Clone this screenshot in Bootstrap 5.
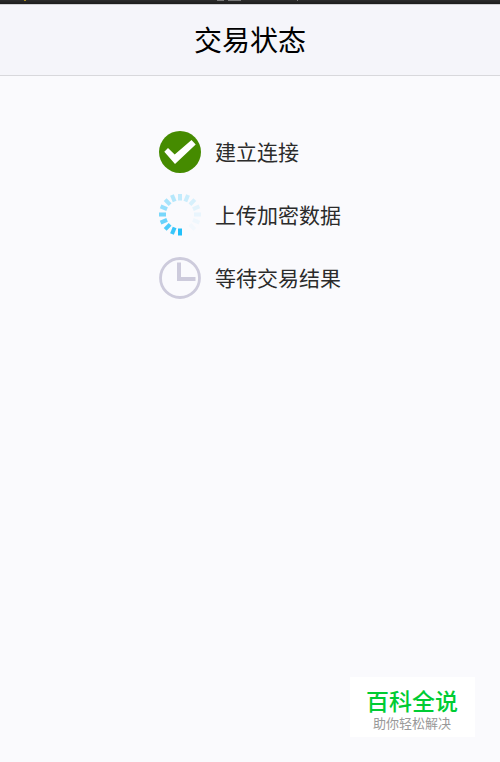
<!DOCTYPE html>
<html lang="zh-CN">
<head>
<meta charset="utf-8">
<meta name="viewport" content="width=device-width, initial-scale=1">
<title>交易状态</title>
<link href="https://cdn.jsdelivr.net/npm/bootstrap@5.3.0/dist/css/bootstrap.min.css" rel="stylesheet">
<style>
body { background: #fafafd; color: #2b2b2b; font-family: "Noto Sans CJK SC", sans-serif; }
.status-strip { height: 4px; background: linear-gradient(#2c2c2c, #1c1c1c); }
.title-bar { background: #f5f5fa; border-top: 1px solid #d0d0d4; border-bottom: 1px solid #d8d8dc; padding: 13px 0 15px; }
.title-bar h1 { font-size: 28px; line-height: 42px; font-weight: 400; color: #000; }
.steps { margin-top: 55px; gap: 21px; }
.step { gap: 14px; font-size: 21px; line-height: 40px; }
.brand { background: #fff; margin: 25px; padding: 8px 17px 6px 16px; }
.brand-name { color: #0c3; font-size: 23px; line-height: 30px; font-weight: 500; }
.brand-line { color: #999; font-size: 13px; line-height: 16px; }
</style>
<script src="https://cdn.jsdelivr.net/npm/bootstrap@5.3.0/dist/js/bootstrap.bundle.min.js" defer></script>
</head>
<body class="d-flex flex-column min-vh-100">
<div class="status-strip d-flex" aria-hidden="true">
  <svg width="300" height="4" viewBox="0 0 300 4"><path fill="#a68a20" d="M24 0h2v1h-2z"/><path fill="#777" d="M217 0h7v1h-7zM228 0h13v1h-13zM297 0h1v1h-1z"/></svg>
</div>
<header class="title-bar text-center">
  <h1 class="m-0">交易状态</h1>
</header>
<main class="flex-grow-1 d-flex justify-content-center align-items-start">
  <ul class="steps list-unstyled d-flex flex-column mb-0">
    <li class="step d-flex align-items-start">
      <svg width="42" height="42" viewBox="0 0 42 42" aria-hidden="true"><circle cx="21" cy="21" r="21" fill="#458b00"/><path fill="#fff" d="M5.3 20.8 9 17l6.7 6.6L32.5 9l4.2 4.6L16 33z"/></svg>
      <span>建立连接</span>
    </li>
    <li class="step d-flex align-items-start">
      <svg width="42" height="42" viewBox="0 0 42 42" aria-hidden="true" fill="#22c0fa">
        <defs><rect id="tick" x="19" y="34.5" width="4" height="7"/></defs>
        <use href="#tick"/>
        <use href="#tick" transform="rotate(22.5 21 20.5)" opacity=".9"/>
        <use href="#tick" transform="rotate(45 21 20.5)" opacity=".8"/>
        <use href="#tick" transform="rotate(67.5 21 20.5)" opacity=".68"/>
        <use href="#tick" transform="rotate(90 21 20.5)" opacity=".6"/>
        <use href="#tick" transform="rotate(112.5 21 20.5)" opacity=".46"/>
        <use href="#tick" transform="rotate(135 21 20.5)" opacity=".38"/>
        <use href="#tick" transform="rotate(157.5 21 20.5)" opacity=".32"/>
        <use href="#tick" transform="rotate(180 21 20.5)" opacity=".26"/>
        <use href="#tick" transform="rotate(202.5 21 20.5)" opacity=".22"/>
        <use href="#tick" transform="rotate(225 21 20.5)" opacity=".16"/>
        <use href="#tick" transform="rotate(247.5 21 20.5)" opacity=".11"/>
        <use href="#tick" transform="rotate(270 21 20.5)" opacity=".08"/>
        <use href="#tick" transform="rotate(292.5 21 20.5)" opacity=".05"/>
        <use href="#tick" transform="rotate(315 21 20.5)" opacity=".03"/>
      </svg>
      <span>上传加密数据</span>
    </li>
    <li class="step d-flex align-items-start">
      <svg width="42" height="42" viewBox="0 0 42 42" aria-hidden="true" fill="none" stroke="#cdcbdc"><circle cx="21" cy="21" r="19.5" stroke-width="2.8"/><path d="M20 5.5V22h16.5" stroke-width="4"/></svg>
      <span>等待交易结果</span>
    </li>
  </ul>
</main>
<footer class="d-flex justify-content-end">
  <div class="brand text-center">
    <div class="brand-name">百科全说</div>
    <div class="brand-line">助你轻松解决</div>
  </div>
</footer>
</body>
</html>
